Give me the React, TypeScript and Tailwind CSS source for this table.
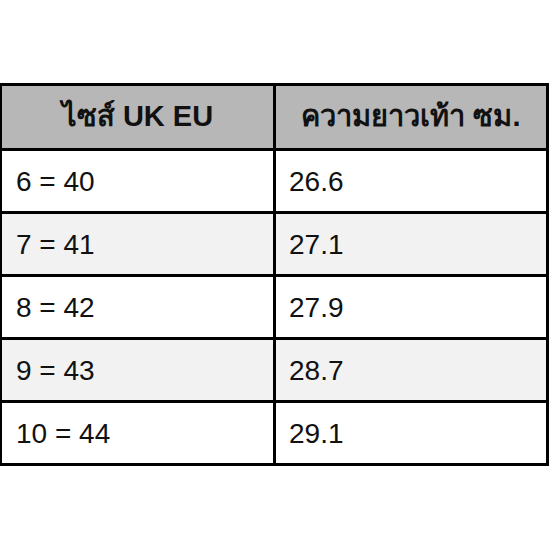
const rows = [
  { size: "6 = 40", length: "26.6" },
  { size: "7 = 41", length: "27.1" },
  { size: "8 = 42", length: "27.9" },
  { size: "9 = 43", length: "28.7" },
  { size: "10 = 44", length: "29.1" },
];

const App = () => {
  return (
    <div className="w-[550px] h-[550px] bg-white pt-[83px] font-['Liberation_Sans','Noto_Sans',sans-serif] text-[#111]">
      <div className="w-[549px] border-[3px] border-l-2 border-black">
        <div className="flex h-[62px] bg-[#b7b7b7] text-[29px] font-bold">
          <div className="flex w-[274px] items-center justify-center border-r-[3px] border-black">
            ไซส์ UK EU
          </div>
          <div className="flex flex-1 items-center justify-center">
            ความยาวเท้า ซม.
          </div>
        </div>
        {rows.map((row, i) => (
          <div
            key={row.size}
            className={`flex h-[63px] border-t-[3px] border-black text-[28px] ${
              i % 2 === 1 ? "bg-[#f2f2f2]" : "bg-white"
            }`}
          >
            <div className="flex w-[274px] items-center border-r-[3px] border-black pl-[14px] pt-[2px]">
              {row.size}
            </div>
            <div className="flex flex-1 items-center pl-[13px] pt-[2px]">
              {row.length}
            </div>
          </div>
        ))}
      </div>
    </div>
  );
};

export default App;
